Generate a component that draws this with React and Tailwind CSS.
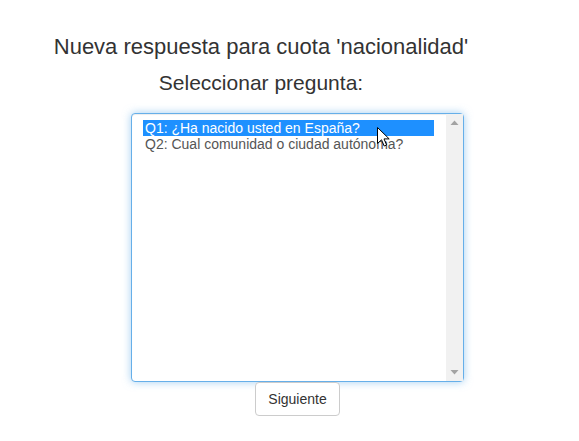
import React from "react";

export default function App() {
  const font = { fontFamily: '"Liberation Sans", Arial, sans-serif' };
  return (
    <div className="relative w-[579px] h-[441px] bg-white" style={font}>
      <div className="flex flex-col pt-[34px]">
        <div className="w-[522px] text-center text-[22px] leading-[26px] text-[#333]">
          Nueva respuesta para cuota 'nacionalidad'
        </div>
        <div className="w-[522px] mt-[11px] text-center text-[21px] leading-[24px] text-[#333]">
          Seleccionar pregunta:
        </div>
        <div className="ml-[131px] w-[333px] mt-[18px] flex flex-col items-center">
          <div className="w-[333px] h-[269px] flex border border-[#66afe9] rounded-[4px] shadow-[inset_0_1px_1px_rgba(0,0,0,0.075),0_0_8px_rgba(102,175,233,0.6)] bg-white">
            <div className="flex-1 pt-[6px] pb-[6px] pl-[11px] pr-[12px] text-[14px] leading-[16px] text-[#555]">
              <div className="bg-[#1e90ff] text-white px-[2px] h-[16px] whitespace-nowrap">
                Q1: ¿Ha nacido usted en España?
              </div>
              <div className="px-[2px] h-[16px] whitespace-nowrap">
                Q2: Cual comunidad o ciudad autónoma?
              </div>
            </div>
            <div className="w-[17px] bg-[#f1f1f1] flex flex-col justify-between items-center py-[6px]">
              <svg width="9" height="5" viewBox="0 0 9 5">
                <path d="M0.5 5 L4.5 0.5 L8.5 5 Z" fill="#a3a3a3" />
              </svg>
              <svg width="9" height="5" viewBox="0 0 9 5">
                <path d="M0.5 0 L4.5 4.5 L8.5 0 Z" fill="#a3a3a3" />
              </svg>
            </div>
          </div>
          <button className="h-[34px] px-[12px] border border-[#ccc] rounded-[4px] bg-white text-[14px] leading-[20px] text-[#333]">
            Siguiente
          </button>
        </div>
      </div>
      <svg
        className="absolute left-[377px] top-[127px]"
        width="13"
        height="20"
        viewBox="0 0 13 20"
      >
        <path
          d="M0.5 0.5 L0.5 16.5 L4.5 12.8 L7.2 19 L9.6 18 L7 11.9 L12.2 11.9 Z"
          fill="white"
          stroke="black"
          strokeWidth="1"
          strokeLinejoin="miter"
        />
      </svg>
    </div>
  );
}
